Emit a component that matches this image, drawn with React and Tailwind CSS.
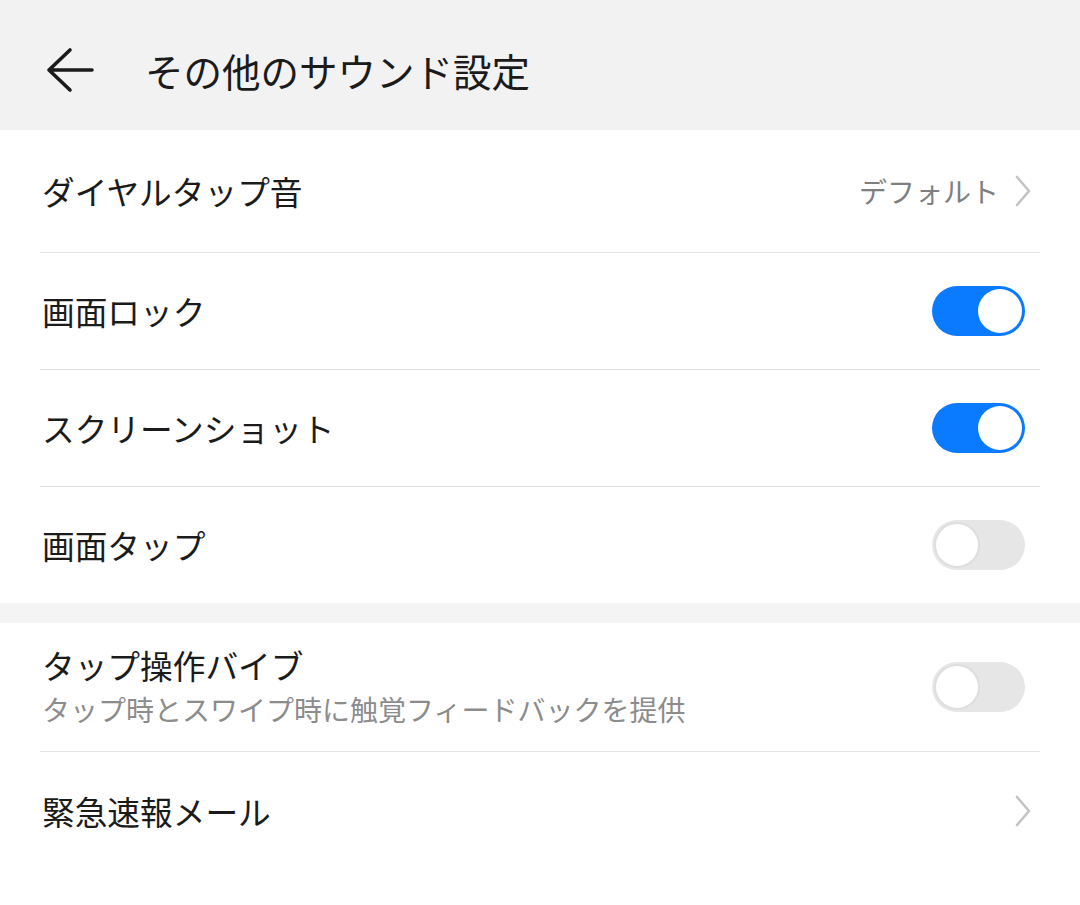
import React from "react";

const font = { fontFamily: '"Noto Sans CJK JP", "Noto Sans", sans-serif' };

function Toggle({ on }) {
  return on ? (
    <div className="w-[93px] h-[50px] rounded-full bg-[#0a7aff] flex items-center justify-end px-[3px]">
      <div className="w-[44px] h-[44px] rounded-full bg-white" />
    </div>
  ) : (
    <div className="w-[93px] h-[50px] rounded-full bg-[#e6e6e6] flex items-center justify-start px-[2px]">
      <div className="w-[46px] h-[46px] rounded-full bg-white border-[2px] border-[#dedede]" />
    </div>
  );
}

function Chevron() {
  return (
    <svg width="20" height="32" viewBox="0 0 20 32" className="ml-[14px]">
      <path d="M4 2 L16 16 L4 30" fill="none" stroke="#c4c4c4" strokeWidth="2.6" strokeLinecap="round" strokeLinejoin="round" />
    </svg>
  );
}

function Row({ title, sub, right, divider = true, h = "h-[117px]" }) {
  return (
    <div className="px-[40px]">
      <div className={`${h} flex items-center justify-between ${divider ? "border-b border-[#e3e3e3]" : ""}`}>
        <div className="flex flex-col pl-[2px]">
          <div className="text-[32.7px] leading-[40px] text-[#1b1b1b]">{title}</div>
          {sub && <div className="text-[28px] leading-[40px] text-[#8c8c8c] mt-[4px]">{sub}</div>}
        </div>
        <div className="flex items-center pr-[15px]">{right}</div>
      </div>
    </div>
  );
}

export default function App() {
  return (
    <div style={font} className="w-[1080px] h-[905px] bg-white overflow-hidden">
      <div className="h-[130px] bg-[#f2f2f2] flex items-center">
        <svg width="52" height="48" viewBox="0 0 52 48" className="ml-[44px] mt-[10px]">
          <path d="M26 4 L5 24 L26 44 M5 24 L48 24" fill="none" stroke="#1b1b1b" strokeWidth="3.6" strokeLinecap="round" strokeLinejoin="round" />
        </svg>
        <div className="ml-[49px] text-[38.5px] leading-[48px] text-[#1b1b1b] mt-[10px]">その他のサウンド設定</div>
      </div>
      <Row
        title="ダイヤルタップ音"
        h="h-[123px]"
        right={
          <>
            <span className="text-[28px] text-[#7f7f7f]">デフォルト</span>
            <div className="-mr-[8px]"><Chevron /></div>
          </>
        }
      />
      <Row title="画面ロック" right={<Toggle on />} />
      <Row title="スクリーンショット" right={<Toggle on />} />
      <Row title="画面タップ" right={<Toggle on={false} />} divider={false} h="h-[116px]" />
      <div className="h-[20px] bg-[#f4f4f4]" />
      <Row
        title="タップ操作バイブ"
        sub="タップ時とスワイプ時に触覚フィードバックを提供"
        right={<Toggle on={false} />}
        h="h-[129px]"
      />
      <Row title="緊急速報メール" right={<div className="-mr-[8px]"><Chevron /></div>} divider={false} />
    </div>
  );
}
